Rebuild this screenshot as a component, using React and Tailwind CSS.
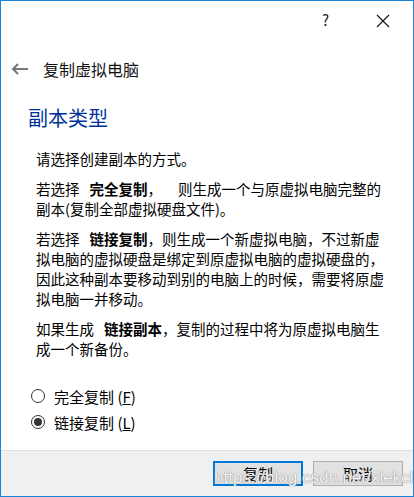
import { useState } from "react";

const FONT = { fontFamily: '"Noto Sans CJK SC", "Liberation Sans", sans-serif' };

function Radio({ checked, label, hotkey, onClick }) {
  return (
    <button onClick={onClick} className="flex items-center h-[26px] text-left">
      <span className="w-[14px] h-[14px] rounded-full border border-[#333] bg-white flex items-center justify-center">
        {checked && <span className="w-[8px] h-[8px] rounded-full bg-[#333]" />}
      </span>
      <span className="ml-[9px] text-[15px] text-black leading-none">
        {label} (<span className="underline">{hotkey}</span>)
      </span>
    </button>
  );
}

export default function App() {
  const [mode, setMode] = useState("link");

  return (
    <div
      className="relative w-[414px] h-[497px] bg-white border border-[#1883d7] flex flex-col overflow-hidden"
      style={FONT}
    >
      {/* title bar */}
      <div className="h-[39px] flex items-center justify-end">
        <span className="text-[15px] text-[#222] mr-[47px]">?</span>
        <svg width="14" height="14" viewBox="0 0 14 14" className="mr-[23px]">
          <path d="M1 1 L13 13 M13 1 L1 13" stroke="#111" strokeWidth="1.1" />
        </svg>
      </div>

      {/* header */}
      <div className="flex items-center h-[20px] mt-[19px] pl-[10px]">
        <svg width="18" height="12" viewBox="0 0 18 12">
          <path d="M17 6 H2 M7 1 L2 6 L7 11" stroke="#777" strokeWidth="2" fill="none" />
        </svg>
        <span className="ml-[14px] text-[16px] text-[#111]">复制虚拟电脑</span>
      </div>

      <div className="pl-[27px] mt-[27px] text-[20px] text-[#003399] leading-[24px]">副本类型</div>

      {/* body */}
      <div className="pl-[35px] mt-[19px] text-[14.5px] leading-[20px] text-black flex flex-col gap-[10px]">
        <p>请选择创建副本的方式。</p>
        <p className="whitespace-nowrap">
          若选择<span className="inline-block w-[10px]" />
          <b>完全复制</b>，<span className="inline-block w-[16px]" />
          则生成一个与原虚拟电脑完整的
          <br />
          副本(复制全部虚拟硬盘文件)。
        </p>
        <p className="whitespace-nowrap">
          若选择<span className="inline-block w-[10px]" />
          <b>链接复制</b>，则生成一个新虚拟电脑，不过新虚
          <br />
          拟电脑的虚拟硬盘是绑定到原虚拟电脑的虚拟硬盘的，
          <br />
          因此这种副本要移动到别的电脑上的时候，需要将原虚
          <br />
          拟电脑一并移动。
        </p>
        <p className="whitespace-nowrap">
          如果生成<span className="inline-block w-[10px]" />
          <b>链接副本</b>，复制的过程中将为原虚拟电脑生
          <br />
          成一个新备份。
        </p>
      </div>

      <div className="flex-1" />

      {/* options */}
      <div className="pl-[30px] pb-[15px] flex flex-col">
        <Radio checked={mode === "full"} label="完全复制" hotkey="F" onClick={() => setMode("full")} />
        <Radio checked={mode === "link"} label="链接复制" hotkey="L" onClick={() => setMode("link")} />
      </div>

      {/* footer */}
      <div className="h-[46px] bg-[#f0f0f0] border-t border-[#dfdfdf] flex items-center justify-end gap-[10px] pr-[10px]">
        <button className="w-[90px] h-[25px] bg-[#e1e1e1] border-2 border-[#0078d7] text-[15px] text-black leading-none">
          复制
        </button>
        <button className="w-[90px] h-[25px] bg-[#e1e1e1] border border-[#adadad] text-[15px] text-black leading-none">
          取消
        </button>
      </div>

      {/* watermark */}
      <span
        className="absolute left-[213px] top-[464px] text-[17px] text-white/90 pointer-events-none"
        style={{ fontFamily: '"Liberation Sans", sans-serif', textShadow: "0 0 1px #888, 0 0 1px #888" }}
      >
        https://blog.csdn.net/xiekch
      </span>
    </div>
  );
}
